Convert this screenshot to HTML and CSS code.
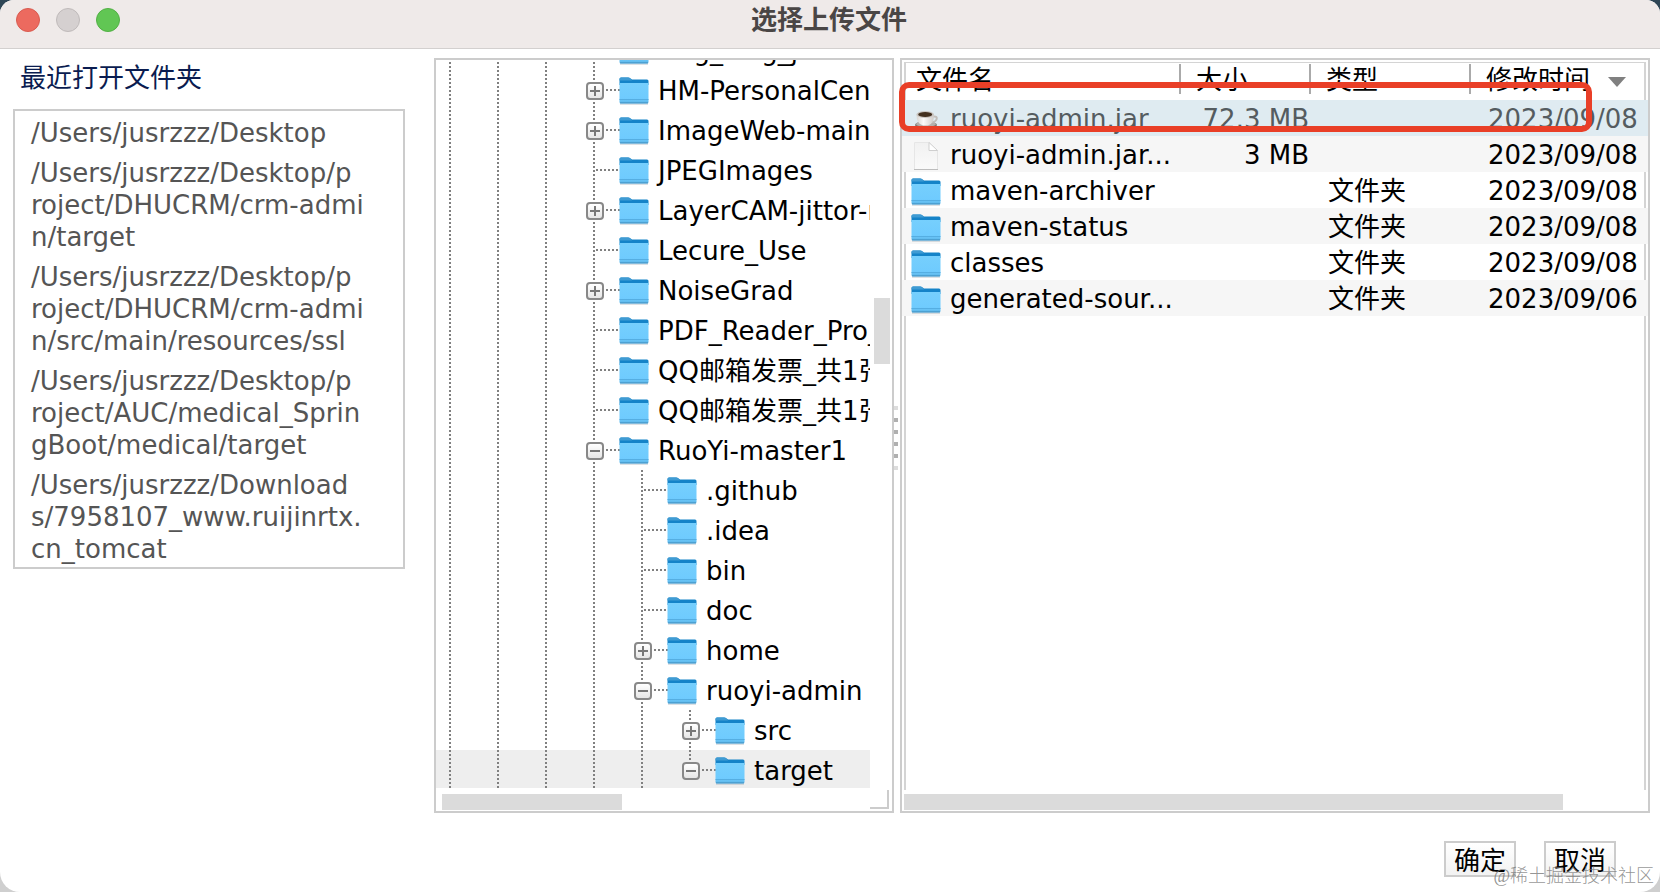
FILE: index.html
```html
<!DOCTYPE html>
<html lang="zh-CN">
<head>
    <meta charset="UTF-8">
    <meta name="viewport" content="width=device-width, initial-scale=1.0">
    <title>选择上传文件</title>
    <link rel="stylesheet" href="styles.css">
</head>
<body>
    <svg class="defs" width="0" height="0">
        <defs>
            <linearGradient id="folder-front" x1="0" y1="0" x2="0" y2="1">
                <stop offset="0" stop-color="#76cffd"/>
                <stop offset="0.75" stop-color="#6fcbfe"/>
                <stop offset="1" stop-color="#5bb4e6"/>
            </linearGradient>
            <linearGradient id="page-fill" x1="0" y1="0" x2="0" y2="1">
                <stop offset="0" stop-color="#f1f1f1"/>
                <stop offset="1" stop-color="#fafafa"/>
            </linearGradient>
            <linearGradient id="cup-fill" x1="0" y1="0" x2="1" y2="0">
                <stop offset="0" stop-color="#d9d5d1"/>
                <stop offset="0.4" stop-color="#fbfaf9"/>
                <stop offset="1" stop-color="#cfcbc8"/>
            </linearGradient>
            <symbol id="folder" viewBox="0 0 30 28">
                <path d="M1 26.500h28v1H1z" fill="#8d9ba3" opacity="0.6"/>
                <path d="M0.500 2Q0.500 0.500 2 0.500h7q1.500 0 2.500 1L13 2.500H28q1.500 0 1.500 1.500v4h-29z" fill="#1583c8"/>
                <path d="M0.500 2Q0.500 0.500 2 0.500h7q1.500 0 2.500 1L13 3.500H0.500z" fill="#3f9bd3"/>
                <path d="M0.500 6h29V25q0 1.500-1.500 1.500H2q-1.500 0-1.500-1.500z" fill="url(#folder-front)"/>
                <path d="M0.500 22.500h29" stroke="#55aee2" stroke-width="1"/>
                <path d="M1 25.800h28" stroke="#4698c8" stroke-width="1"/>
            </symbol>
            <symbol id="page" viewBox="0 0 30 28">
                <path d="M3.500 0.500H18l8.500 8V27.500h-23z" fill="url(#page-fill)" stroke="#e6e6e6"/>
                <path d="M18 0.500v8h8.500z" fill="#fff" stroke="#cfcfcf"/>
                <path d="M3 27.500h24" stroke="#bdbdbd"/>
            </symbol>
            <symbol id="coffee" viewBox="0 0 30 28">
                <ellipse cx="15" cy="19" rx="11" ry="4" fill="#77736f"/>
                <ellipse cx="15" cy="18" rx="10" ry="3" fill="#b5b0ac"/>
                <path d="M22 10.500q5-0.500 3.500 3-1 2.500-4.500 2.500" fill="none" stroke="#c2beba" stroke-width="2"/>
                <path d="M5.500 8.500q0 9.500 6.500 11h5q6-1.500 6-11z" fill="url(#cup-fill)"/>
                <ellipse cx="14.200" cy="8.500" rx="8.800" ry="3.500" fill="#c9c5c1"/>
                <ellipse cx="14.200" cy="8.500" rx="7" ry="2.500" fill="#43301f"/>
            </symbol>
        </defs>
    </svg>

    <div class="window">
        <header class="titlebar">
            <div class="lights">
                <button class="light close" aria-label="关闭"></button>
                <button class="light minimize" aria-label="最小化" disabled></button>
                <button class="light maximize" aria-label="缩放"></button>
            </div>
            <h1>选择上传文件</h1>
        </header>

        <main class="content">
            <section class="recent">
                <h2>最近打开文件夹</h2>
                <ul class="recent-list">
                    <li>/Users/jusrzzz/Desktop</li>
                    <li>/Users/jusrzzz/Desktop/p<br>roject/DHUCRM/crm-admi<br>n/target</li>
                    <li>/Users/jusrzzz/Desktop/p<br>roject/DHUCRM/crm-admi<br>n/src/main/resources/ssl</li>
                    <li>/Users/jusrzzz/Desktop/p<br>roject/AUC/medical_Sprin<br>gBoot/medical/target</li>
                    <li>/Users/jusrzzz/Download<br>s/7958107_www.ruijinrtx.<br>cn_tomcat</li>
                </ul>
            </section>

            <section class="pane tree-pane">
                <ul class="tree" id="tree"></ul>
                <div class="scroll-y"><div class="thumb"></div></div>
                <div class="scroll-x"><div class="thumb"></div></div>
                <div class="corner"></div>
            </section>

            <div class="splitter"><i></i><i></i><i></i><i></i><i></i><i></i></div>

            <section class="pane file-pane">
                <div class="file-view">
                    <table class="files">
                        <colgroup>
                            <col class="col-name">
                            <col class="col-size">
                            <col class="col-type">
                            <col class="col-date">
                        </colgroup>
                        <thead>
                            <tr>
                                <th>文件名</th>
                                <th>大小</th>
                                <th>类型</th>
                                <th>修改时间<span class="sort"></span></th>
                            </tr>
                        </thead>
                        <tbody>
                            <tr class="selected">
                                <td><svg class="icon"><use href="#coffee"/></svg>ruoyi-admin.jar</td>
                                <td>72.3 MB</td>
                                <td></td>
                                <td>2023/09/08</td>
                            </tr>
                            <tr>
                                <td><svg class="icon"><use href="#page"/></svg>ruoyi-admin.jar...</td>
                                <td>3 MB</td>
                                <td></td>
                                <td>2023/09/08</td>
                            </tr>
                            <tr>
                                <td><svg class="icon"><use href="#folder"/></svg>maven-archiver</td>
                                <td></td>
                                <td>文件夹</td>
                                <td>2023/09/08</td>
                            </tr>
                            <tr>
                                <td><svg class="icon"><use href="#folder"/></svg>maven-status</td>
                                <td></td>
                                <td>文件夹</td>
                                <td>2023/09/08</td>
                            </tr>
                            <tr>
                                <td><svg class="icon"><use href="#folder"/></svg>classes</td>
                                <td></td>
                                <td>文件夹</td>
                                <td>2023/09/08</td>
                            </tr>
                            <tr>
                                <td><svg class="icon"><use href="#folder"/></svg>generated-sour...</td>
                                <td></td>
                                <td>文件夹</td>
                                <td>2023/09/06</td>
                            </tr>
                        </tbody>
                    </table>
                </div>
                <div class="scroll-x"><div class="thumb"></div></div>
                <div class="highlight"></div>
            </section>
        </main>

        <footer class="actions">
            <button class="btn">确定</button>
            <button class="btn">取消</button>
        </footer>
    </div>
    <div class="watermark">@稀土掘金技术社区</div>

    <script src="script.js"></script>
</body>
</html>
```

FILE: styles.css
```css
* {
    box-sizing: border-box;
}

body {
    margin: 0;
    height: 100vh;
    overflow: hidden;
    position: relative;
    background: linear-gradient(#2f4656 50%, #cfcfcf 50%);
    font-family: "DejaVu Sans", "Noto Sans CJK SC", sans-serif;
    font-size: 26px;
    line-height: 32px;
    color: #000;
}

ul {
    margin: 0;
    padding: 0;
    list-style: none;
}

.defs {
    position: absolute;
}

.window {
    height: 100%;
    display: flex;
    flex-direction: column;
    background: #fff;
    border-radius: 14px 14px 20px 20px;
    overflow: hidden;
}

/* title bar */
.titlebar {
    display: grid;
    grid-template-columns: 1fr auto 1fr;
    align-items: center;
    height: 49px;
    padding: 0 18px 8px 16px;
    background: #efeae9;
    border-bottom: 1px solid #d3d0cf;
}

.titlebar h1 {
    margin: 0;
    font-size: 26px;
    font-weight: bold;
    color: #4a4645;
}

.lights {
    display: flex;
    gap: 16px;
}

.light {
    width: 24px;
    height: 24px;
    padding: 0;
    border: 1px solid;
    border-radius: 50%;
}

.close {
    background: #ec6a5f;
    border-color: #d85b50;
}

.minimize {
    background: #d5d0d0;
    border-color: #bfbaba;
}

.maximize {
    background: #61c654;
    border-color: #52b045;
}

/* three columns */
.content {
    flex: 1;
    min-height: 0;
    display: flex;
    padding: 9px 10px 0 13px;
}

.recent {
    width: 392px;
    margin-right: 29px;
}

.recent h2 {
    margin: 4px 0 15px;
    padding-left: 7px;
    font-size: 26px;
    font-weight: normal;
    color: #0a1c50;
}

.recent-list {
    display: flex;
    flex-direction: column;
    gap: 8px;
    padding: 6px 16px 2px;
    border: 2px solid #ccc;
    color: #555;
    white-space: nowrap;
}

.pane {
    display: grid;
    grid-template-rows: minmax(0, 1fr) 21px;
    border: 2px solid #ccc;
}

.tree-pane {
    width: 460px;
    grid-template-columns: minmax(0, 1fr) 22px;
}

/* folder tree, scrolled to its last rows */
.tree {
    display: flex;
    flex-direction: column;
    justify-content: flex-end;
    overflow: hidden;
}

.tree li {
    flex: none;
    display: flex;
    height: 40px;
    line-height: 42px;
    white-space: nowrap;
}

.tree li.selected {
    background: linear-gradient(#eee 38px, #fff 38px);
}

.guide,
.branch {
    flex: none;
    width: 48px;
    background: repeating-linear-gradient(#808080 0 2px, transparent 2px 4px) 13px 0 / 2px 100% no-repeat;
}

.branch {
    width: 40px;
    display: flex;
    align-items: center;
    padding-left: 6px;
}

.branch.last {
    background-size: 2px 50%;
}

.branch::after {
    content: "";
    flex: 1;
    height: 2px;
    background: repeating-linear-gradient(90deg, transparent 0 2px, #808080 2px 4px);
}

.branch.leaf {
    padding-left: 14px;
}

.toggle {
    position: relative;
    width: 18px;
    height: 18px;
    margin-top: 2px;
    padding: 0;
    border: 2px solid #888;
    border-radius: 4px;
    background: linear-gradient(#fff, #e6e6e6);
}

.toggle::before,
.toggle.plus::after {
    content: "";
    position: absolute;
    left: 2px;
    top: 6px;
    width: 10px;
    height: 2px;
    background: #777;
}

.toggle.plus::after {
    transform: rotate(90deg);
}

.icon {
    flex: none;
    width: 30px;
    height: 28px;
}

.tree .icon {
    margin: 7px 9px 0 -1px;
}

/* scroll bars */
.thumb {
    background: #dbdbdb;
}

.scroll-y {
    padding: 238px 2px 0 4px;
}

.scroll-y .thumb {
    height: 66px;
}

.scroll-x {
    padding: 4px 4px 1px 2px;
}

.tree-pane .scroll-x {
    padding-left: 6px;
}

.scroll-x .thumb {
    width: 180px;
    height: 16px;
}

.file-pane .scroll-x .thumb {
    width: 89%;
}

.corner {
    margin: 0 3px 2px 0;
    border: solid #ccc;
    border-width: 0 2px 2px 0;
}

.splitter {
    width: 6px;
    display: flex;
    flex-direction: column;
    justify-content: center;
    gap: 8px;
    padding-top: 4px;
}

.splitter i {
    width: 4px;
    height: 4px;
    background: #b0b0b0;
}

.splitter i:first-child,
.splitter i:last-child {
    background: #dcdcdc;
}

/* file table */
.file-pane {
    flex: 1;
    min-width: 0;
    position: relative;
}

.file-view {
    position: relative;
    padding-top: 4px;
}

.file-view::before {
    content: "";
    position: absolute;
    inset: 2px 2px 0;
    border: solid #d4d4d4;
    border-width: 1px 2px 0;
}

.files {
    position: relative;
    width: 100%;
    table-layout: fixed;
    border-collapse: collapse;
    white-space: nowrap;
}

.col-name {
    width: 279px;
}

.col-size {
    width: 130px;
}

.col-type {
    width: 160px;
}

.files th {
    height: 36px;
    padding: 0 0 4px 15px;
    text-align: left;
    font-weight: normal;
    background: linear-gradient(#aaa, #aaa) right 0 top 0 / 2px 30px no-repeat;
}

.files th:first-child {
    padding-left: 14px;
}

.files th:last-child {
    background: none;
}

.files td {
    height: 36px;
    padding: 2px 0 0 17px;
}

.files td:first-child {
    padding-left: 9px;
}

.files td:nth-child(2) {
    padding: 2px 2px 0 0;
    text-align: right;
}

.files tbody tr:nth-child(even) {
    background: #f6f6f6;
}

.files tbody tr.selected {
    background: #dfebf1;
    color: #555c60;
}

.files .icon {
    margin: -2px 9px 0 0;
    vertical-align: middle;
}

.sort {
    display: inline-block;
    margin-left: 18px;
    vertical-align: middle;
    border: solid transparent;
    border-width: 10px 9px 0;
    border-top-color: #808080;
}

/* red mark round the jar file */
.highlight {
    position: absolute;
    left: -3px;
    right: 56px;
    top: 22px;
    height: 50px;
    border: 6px solid #e93f27;
    border-radius: 10px;
}

/* buttons */
.actions {
    display: flex;
    justify-content: flex-end;
    gap: 28px;
    padding: 28px 44px 15px 0;
}

.btn {
    width: 72px;
    height: 36px;
    padding: 3px 0 0;
    border: 2px solid #ccc;
    background: linear-gradient(#fff, #f2f2f2);
    font: inherit;
    line-height: 30px;
    color: #000;
}

.watermark {
    position: absolute;
    right: 6px;
    bottom: 3px;
    font-family: "Liberation Serif", "Noto Sans CJK SC", serif;
    font-size: 18px;
    font-weight: 300;
    line-height: 26px;
    color: rgba(120, 120, 120, 0.8);
}
```

FILE: script.js
```js
// depth = number of guide lines in front of the node
const nodes = [
    { name: "Neg_Orig_jittor", depth: 3 },
    { name: "HM-PersonalCenter", depth: 3, state: "plus" },
    { name: "ImageWeb-main", depth: 3, state: "plus" },
    { name: "JPEGImages", depth: 3 },
    { name: "LayerCAM-jittor-main", depth: 3, state: "plus" },
    { name: "Lecure_Use", depth: 3 },
    { name: "NoiseGrad", depth: 3, state: "plus" },
    { name: "PDF_Reader_Pro_", depth: 3 },
    { name: "QQ邮箱发票_共1张", depth: 3 },
    { name: "QQ邮箱发票_共1张", depth: 3 },
    { name: "RuoYi-master1", depth: 3, state: "minus" },
    { name: ".github", depth: 4 },
    { name: ".idea", depth: 4 },
    { name: "bin", depth: 4 },
    { name: "doc", depth: 4 },
    { name: "home", depth: 4, state: "plus" },
    { name: "ruoyi-admin", depth: 4, state: "minus" },
    { name: "src", depth: 5, state: "plus" },
    { name: "target", depth: 5, state: "minus", last: true, selected: true }
];

const tree = document.getElementById("tree");

nodes.forEach(node => {
    const li = document.createElement("li");
    if (node.selected) li.classList.add("selected");

    let html = '<span class="guide"></span>'.repeat(node.depth);
    html += `<span class="branch${node.state ? "" : " leaf"}${node.last ? " last" : ""}">`;
    if (node.state) {
        html += `<button class="toggle ${node.state}" aria-label="${node.name}"></button>`;
    }
    html += "</span>";
    html += '<svg class="icon"><use href="#folder"/></svg>';
    html += `<span>${node.name}</span>`;

    li.innerHTML = html;
    tree.appendChild(li);
});
```
